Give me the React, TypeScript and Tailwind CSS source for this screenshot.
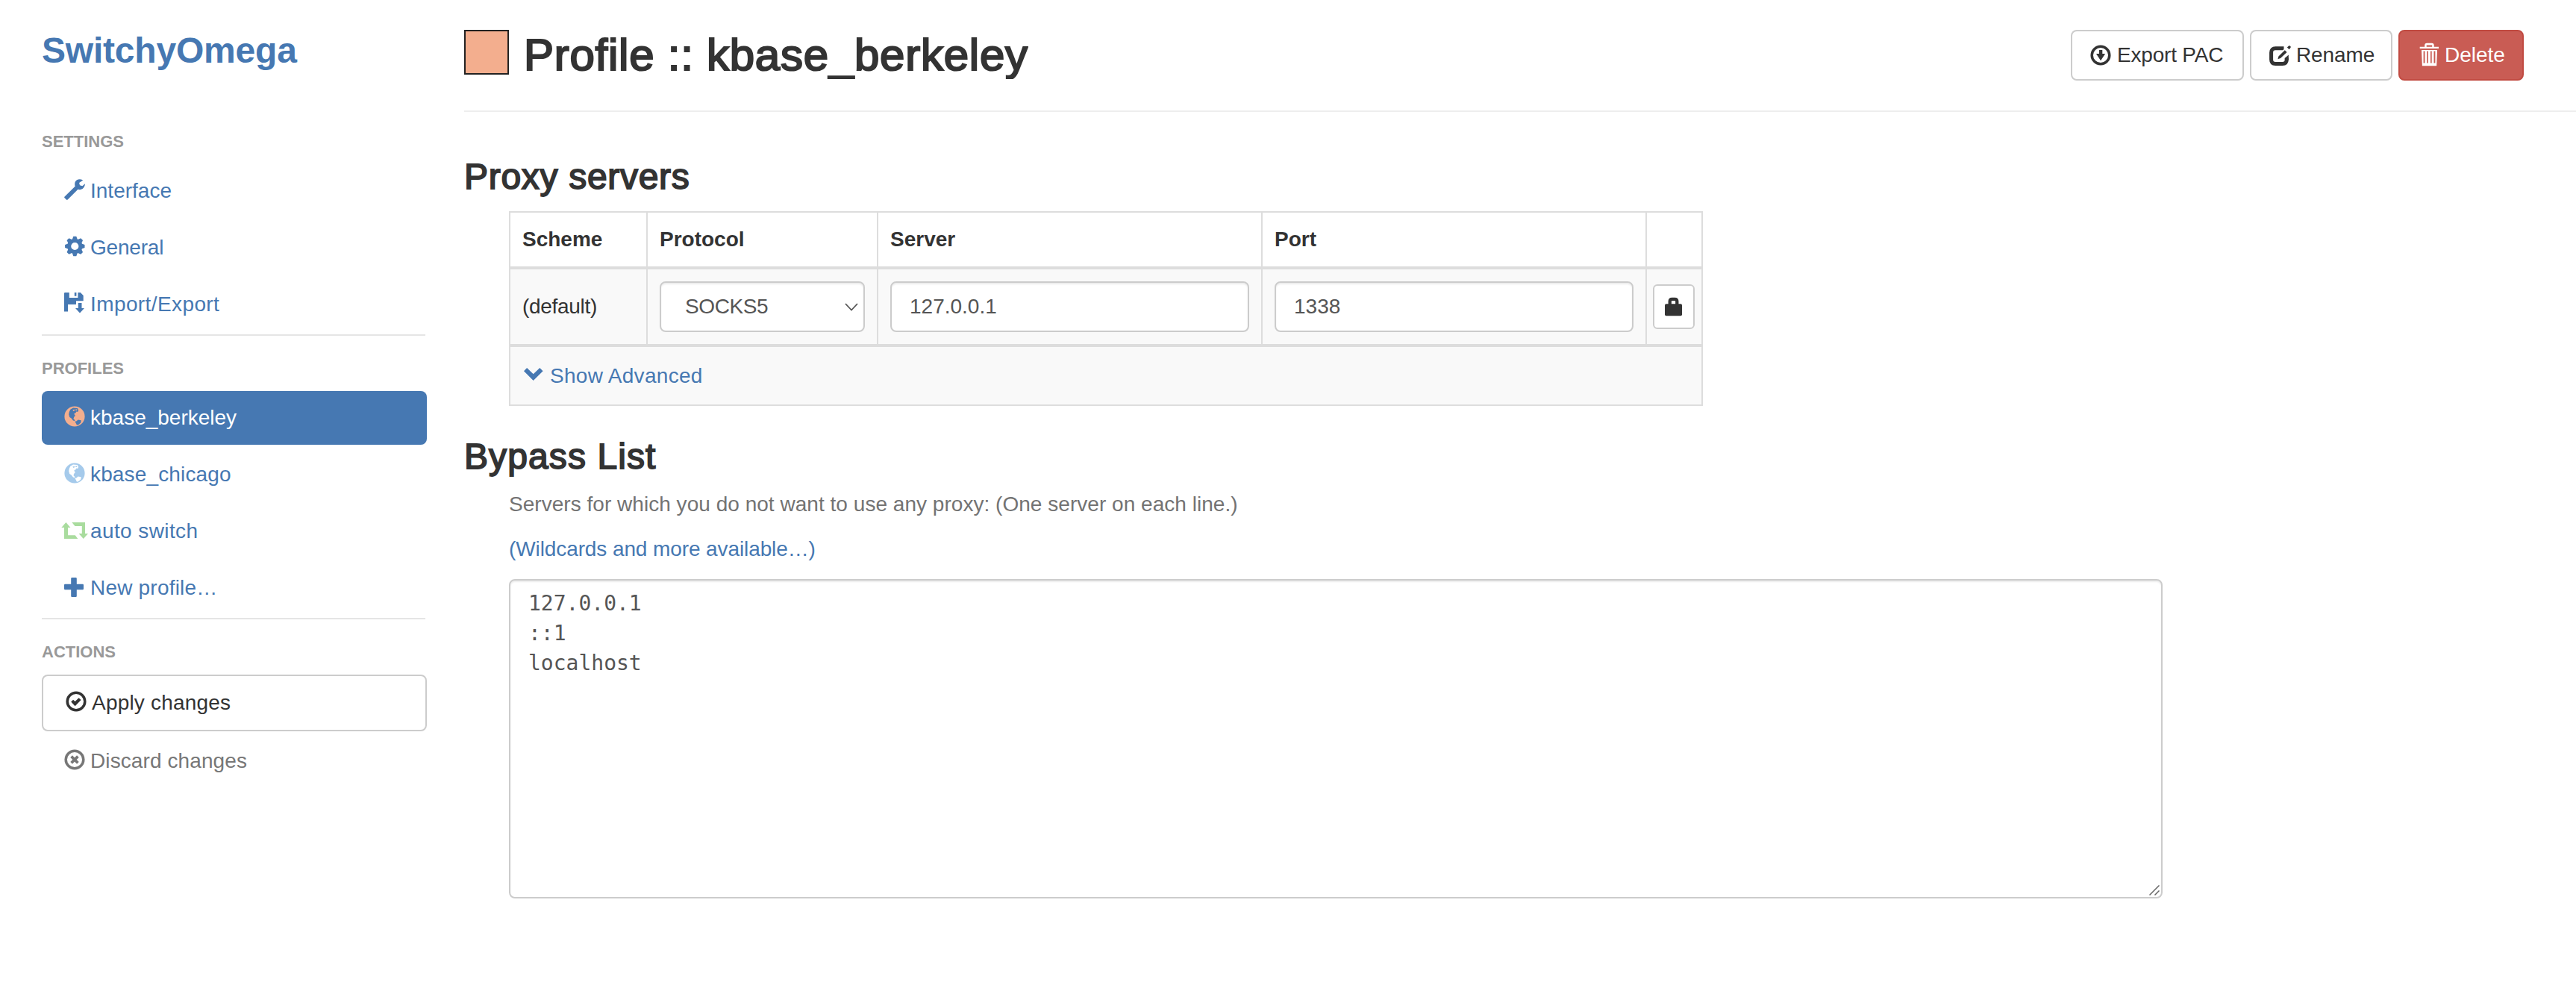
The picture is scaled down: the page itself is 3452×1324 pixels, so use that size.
import type { ReactNode } from "react";

type IconProps = { className?: string };

function Glyph({ className = "", children }: IconProps & { children: ReactNode }) {
  return (
    <svg viewBox="0 0 28 28" fill="currentColor" className={`h-7 w-7 shrink-0 overflow-visible ${className}`}>
      {children}
    </svg>
  );
}

const Wrench = () => (
  <Glyph>
    <path d="M25.2 1.4C21-.8 16 .2 14.6 4c-.6 2-.5 4 0 5.8L.6 23.4q-.9.9 0 1.8l2.3 2.3q.9.9 1.8 0L18.4 13.8C23.2 15.4 27.6 12 28 6.3l-3.6 3-3.4-1-.9-3.4z" />
  </Glyph>
);

const Cog = () => (
  <Glyph>
    <circle cx="14.3" cy="14" r="7.6" fill="none" stroke="currentColor" strokeWidth="5" />
    {[0, 45, 90, 135, 180, 225, 270, 315].map((a) => (
      <path key={a} d="M10.6 5.5L12.3 .8h4l1.700 4.700z" transform={`rotate(${a} 14.3 14)`} />
    ))}
  </Glyph>
);

const FloppySave = () => (
  <Glyph>
    <path d="M.8 0H6.800V7H18.400V0H21.800L25.700 4V11.300H16V16H5V25.500H0V.8z" />
    <path d="M13.800 0h2.600v4.700h-2.600zM18.800 14h4.700v7H27l-6 6.400L15 21h3.800z" />
  </Glyph>
);

const Globe = ({ className }: IconProps) => (
  <Glyph className={className}>
    <path
      fillRule="evenodd"
      d="M14 .4a13.600 13.600 0 1 0 0 27.200a13.600 13.600 0 1 0 0-27.200zM8.300 4.800L12 2.600l5.800 .3 1.400 2.800-1 2.300-1.700-.6-1.300 2-1.700.6.200 1.500 1.200 1.500-1.500 1.500-1 2.500 1.300 1.300.8 1.900-2.600-.7-2.300-3L7.200 14.900l-1-3.600.6-3.300zM14.300 20.700l2-.2 2.300-1.900 4.100.7-.3 3-2.900 2.700-2.500.7-1.200-2.500z"
    />
    <path d="M11.300 5.300l2.400-.6.6 1.300-1.800.9zM15.300 4.600h1.900v1.300h-1.900z" />
  </Glyph>
);

const Retweet = ({ className }: IconProps) => (
  <Glyph className={className}>
    <path d="M2.400 4L8.400 11H5V21.300H14.700L18.300 26H0V11H-3.700zM10.400 4H28V19H32L25.800 26L19.600 19H23.800V9H14.400z" />
  </Glyph>
);

const Plus = () => (
  <Glyph>
    <path d="M10.400 2h5.200q1.200 0 1.200 1.200v7.500h8q1.200 0 1.200 1.200v5.200q0 1.200-1.200 1.200h-8v8.500q0 1.200-1.200 1.200h-5.200q-1.200 0-1.200-1.200v-8.500h-8q-1.200 0-1.200-1.200v-5.200q0-1.200 1.200-1.200h8V3.200q0-1.200 1.200-1.200z" />
  </Glyph>
);

const Ring = () => <circle cx="14" cy="14" r="11.800" fill="none" stroke="currentColor" strokeWidth="3.500" />;

const OkCircle = () => (
  <Glyph>
    <Ring />
    <path d="M7.200 14.600l2.900-2.900 2.500 2.300 5-4.800 3 2.900-8 8.200z" />
  </Glyph>
);

const RemoveCircle = () => (
  <Glyph>
    <Ring />
    <path d="M9.600 9.600l8.800 8.800M18.400 9.600l-8.800 8.800" stroke="currentColor" strokeWidth="3.800" />
  </Glyph>
);

const DownloadCircle = () => (
  <Glyph>
    <Ring />
    <path d="M11.900 7h4.400v5h3.800L14.100 21.300 8 12h3.900z" />
  </Glyph>
);

const Edit = () => (
  <Glyph>
    <path
      d="M19.500 4.800H8.300Q2.600 4.800 2.600 10.500v9.300q0 5.700 5.700 5.700h9.300q5.700 0 5.700-5.700v-2.300"
      fill="none"
      stroke="currentColor"
      strokeWidth="5"
    />
    <path d="M25.800 13.500l-5 4.500v3h5z" />
    <path d="M21 4.500L12.500 13.500l-2.500 7 6.500-2.500L26 9z" fill="#fff" />
    <path d="M20.800 7.300l2.800 2.800-8.600 8-3.600 1.200 1-3.700zM26.300 1.300q1-.5 1.900.5t.4 2l-2 2.400-2.700-2.700z" />
  </Glyph>
);

const Trash = () => (
  <Glyph>
    <path d="M2.700 2.700h6.500v-2q0-3 3-3h6.500q3 0 3 3v2h6.300v2.400H2.700zM11.700 2.700h7.500V.6h-7.500z" fillRule="evenodd" />
    <path
      fillRule="evenodd"
      d="M5 7h21l-.8 21.200H5.900zM7.600 8.500v16h1.900v-16zM12.200 8.500v16h1.700v-16zM17 8.500v16h1.700v-16zM21.500 8.500v16h1.900v-16z"
    />
  </Glyph>
);

const ChevronDown = () => (
  <Glyph>
    <path d="M2 9.300L6.100 5l8.600 8.300L23.300 5l4.300 4.300L14.700 22z" />
  </Glyph>
);

const Lock = () => (
  <svg viewBox="0 0 24 24" fill="currentColor" className="h-6 w-6 shrink-0 overflow-visible">
    <path d="M1.800 8.200H21.200Q23 8.200 23 10V22.500q0 1.800-1.800 1.800H1.800Q0 24.300 0 22.500V10q0-1.800 1.800-1.800z" />
    <path d="M6.700 9V4.800q0-3 3-3h3.600q3 0 3 3V9" fill="none" stroke="currentColor" strokeWidth="4.300" />
  </svg>
);

function Section({ title }: { title: string }) {
  return (
    <h2 className="flex h-[74px] items-end pb-[10px] text-[22px] leading-10 font-bold text-[#999999]">
      {title}
    </h2>
  );
}

function NavItem({ icon, label, tone = "text-[#4678b2]" }: { icon: ReactNode; label: string; tone?: string }) {
  return (
    <a className={`flex h-[72px] items-center rounded-[8px] px-[30px] leading-10 ${tone}`}>
      <span className="mb-1">{icon}</span>
      <span className="ml-[7px]">{label}</span>
    </a>
  );
}

const Divider = () => <hr className="mt-1 w-[514px] border-t-2 border-[#e5e5e5]" />;

function Button({ className, children }: { className: string; children: ReactNode }) {
  return (
    <button className={`flex h-[68px] items-center rounded-[8px] border-2 pl-6 leading-10 ${className}`}>{children}</button>
  );
}

const field =
  "h-[68px] w-full rounded-[8px] border-2 border-[#cccccc] bg-white px-6 text-[#555555] shadow-[inset_0_2px_2px_rgba(0,0,0,0.075)]";

export default function App() {
  return (
    <div className='flex h-[1324px] w-[3452px] overflow-hidden bg-white font-["Liberation_Sans",Arial,sans-serif] text-[28px] leading-10 text-[#333333]'>
      <aside className="ml-14 w-[516px] shrink-0 pt-[41px]">
        <h1 className="mb-[52px] text-[48px] leading-[53px] font-bold tracking-[-0.2px] text-[#4678b2]">SwitchyOmega</h1>
        <Section title="SETTINGS" />
        <nav className="flex flex-col gap-1">
          <NavItem icon={<Wrench />} label="Interface" />
          <NavItem icon={<Cog />} label="General" tone="tracking-[-0.2px] text-[#4678b2]" />
          <NavItem icon={<FloppySave />} label="Import/Export" tone="tracking-[0.4px] text-[#4678b2]" />
        </nav>
        <Divider />
        <Section title="PROFILES" />
        <nav className="flex flex-col gap-1">
          <NavItem icon={<Globe className="text-[#f3ae8e]" />} label="kbase_berkeley" tone="bg-[#4678b2] text-white" />
          <NavItem icon={<Globe className="text-[#a5caeb]" />} label="kbase_chicago" tone="tracking-[0.15px] text-[#4678b2]" />
          <NavItem icon={<Retweet className="text-[#a9dc9e]" />} label="auto switch" tone="tracking-[0.4px] text-[#4678b2]" />
          <NavItem icon={<Plus />} label="New profile…" tone="tracking-[0.2px] text-[#4678b2]" />
        </nav>
        <Divider />
        <Section title="ACTIONS" />
        <nav className="flex flex-col gap-1">
          <button className="flex h-[76px] items-center rounded-[8px] border-2 border-[#cccccc] px-[30px]">
            <span className="mb-1">
              <OkCircle />
            </span>
            <span className="ml-[7px] tracking-[0.2px]">Apply changes</span>
          </button>
          <NavItem icon={<RemoveCircle />} label="Discard changes" tone="tracking-[0.1px] text-[#777777]" />
        </nav>
      </aside>

      <main className="ml-[50px] flex-1 pt-10">
        <header className="flex h-[110px] items-start border-b-2 border-[#eeeeee]">
          <span className="h-[60px] w-[60px] border-2 border-[#222222] bg-[#f3ae8e]" />
          <h1 className="ml-5 h-[66px] overflow-hidden pt-[2px] text-[60px] leading-[64px] tracking-[0.75px] [-webkit-text-stroke:2.2px_#333333]">
            Profile :: kbase_berkeley
          </h1>
          <div className="mr-[70px] ml-auto flex gap-2">
            <Button className="w-[232px] border-[#cccccc]">
              <DownloadCircle />
              <span className="ml-2 tracking-[-0.2px] whitespace-nowrap">Export PAC</span>
            </Button>
            <Button className="w-[191px] border-[#cccccc]">
              <Edit />
              <span className="ml-2 tracking-[-0.1px]">Rename</span>
            </Button>
            <Button className="w-[168px] border-[#c14b42] bg-[#c95c54] text-white">
              <Trash />
              <span className="ml-2">Delete</span>
            </Button>
          </div>
        </header>

        <h2 className="mt-[60px] text-[48px] leading-[53px] tracking-[0.7px] [-webkit-text-stroke:1.8px_#333333]">
          Proxy servers
        </h2>

        <div className="mt-5 ml-[60px] w-[1600px] border-2 border-[#dddddd]">
          <div className="grid h-[72px] grid-cols-[184px_309px_515px_515px_73px] leading-[72px] font-bold">
            <div className="border-r-2 border-[#dddddd] pl-4">Scheme</div>
            <div className="border-r-2 border-[#dddddd] pl-4">Protocol</div>
            <div className="border-r-2 border-[#dddddd] pl-4">Server</div>
            <div className="border-r-2 border-[#dddddd] pl-4">Port</div>
            <div />
          </div>
          <div className="grid h-[108px] grid-cols-[184px_309px_515px_515px_73px] border-y-4 border-[#dddddd] bg-[#f9f9f9]">
            <div className="flex items-center border-r-2 border-[#dddddd] pl-4 tracking-[-0.3px]">(default)</div>
            <div className="border-r-2 border-[#dddddd] p-4">
              <div className={`${field} flex items-center justify-between`}>
                <span className="ml-2 tracking-[-0.4px]">SOCKS5</span>
                <svg viewBox="0 0 18 11" className="-mr-[17px] h-[11px] w-[18px]">
                  <path d="M1 1l8 8.500L17 1" fill="none" stroke="#555555" strokeWidth="1.800" />
                </svg>
              </div>
            </div>
            <div className="border-r-2 border-[#dddddd] p-4">
              <input className={field} defaultValue="127.0.0.1" />
            </div>
            <div className="border-r-2 border-[#dddddd] p-4">
              <input className={field} defaultValue="1338" />
            </div>
            <div className="flex items-center pl-2">
              <button className="flex h-[60px] w-14 items-center justify-center rounded-[6px] border-2 border-[#cccccc] bg-white">
                <Lock />
              </button>
            </div>
          </div>
          <div className="flex h-[77px] items-start bg-[#f9f9f9] pt-[19px] pl-4 text-[#4678b2]">
            <span className="mt-1">
              <ChevronDown />
            </span>
            <span className="ml-[9px] tracking-[0.3px]">Show Advanced</span>
          </div>
        </div>

        <h2 className="mt-[41px] text-[48px] leading-[53px] tracking-[1.1px] [-webkit-text-stroke:1.8px_#333333]">
          Bypass List
        </h2>
        <div className="ml-[60px] w-[2216px]">
          <p className="mt-[18px] tracking-[0.03px] text-[#737373]">
            Servers for which you do not want to use any proxy: (One server on each line.)
          </p>
          <p className="mt-5">
            <a className="tracking-[-0.1px] text-[#4678b2]">(Wildcards and more available…)</a>
          </p>
          <div className="relative mt-5 h-[428px]">
            <textarea
              className='block h-full w-full resize-none rounded-[8px] border-2 border-[#cccccc] bg-white px-6 py-[11px] font-["DejaVu_Sans_Mono",monospace] text-[28px] leading-10 text-[#555555] shadow-[inset_0_2px_2px_rgba(0,0,0,0.075)]'
              defaultValue={"127.0.0.1\n::1\nlocalhost"}
            />
            <svg viewBox="0 0 14 14" className="absolute right-1 bottom-1 h-[14px] w-[14px]">
              <path d="M.5 13.500L13.500 .5M7.500 13.500L13.500 7.500" stroke="#666666" strokeWidth="1.500" />
            </svg>
          </div>
        </div>
      </main>
    </div>
  );
}
